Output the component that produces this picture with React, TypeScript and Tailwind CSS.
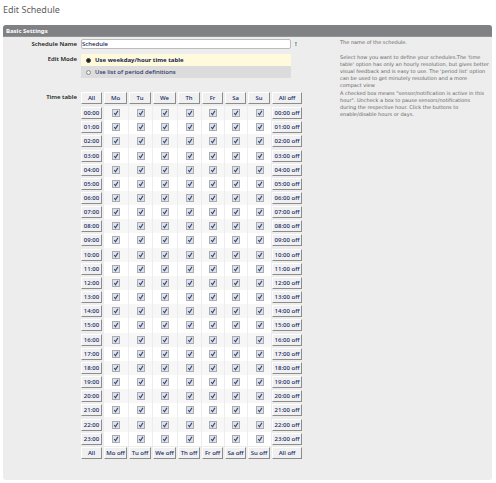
import React, { useState } from 'react';

const DAYS = ['Mo', 'Tu', 'We', 'Th', 'Fr', 'Sa', 'Su'];
const HOURS = Array.from({ length: 24 }, (_, h) => `${String(h).padStart(2, '0')}:00`);
const COLUMNS = ['w-[22px]', 'w-[25px]', 'w-[24px]', 'w-[25px]', 'w-[24px]', 'w-[23px]', 'w-[23px]', 'w-[24px]', 'w-[31px]'];

const fill = (value: boolean) => HOURS.map(() => DAYS.map(() => value));

interface CellButtonProps {
  label: string;
  onClick: () => void;
}

const CellButton: React.FC<CellButtonProps> = ({ label, onClick }) => (
  <button
    type="button"
    onClick={onClick}
    className="block w-full h-3 leading-[10px] text-center font-medium whitespace-nowrap bg-[#f0f0f0] border border-t-white border-l-white border-r-[#8c8c8c] border-b-[#8c8c8c] text-[#152a66]"
  >
    {label}
  </button>
);

interface TickBoxProps {
  label: string;
  checked: boolean;
  onChange: () => void;
}

const TickBox: React.FC<TickBoxProps> = ({ label, checked, onChange }) => (
  <span className="grid place-items-center">
    <input
      type="checkbox"
      aria-label={label}
      checked={checked}
      onChange={onChange}
      className="[grid-area:1/1] appearance-none size-2 bg-[#dfe2e7] border border-[#a9abae]"
    />
    {checked && (
      <svg viewBox="0 0 8 8" className="[grid-area:1/1] size-2 pointer-events-none" fill="none" stroke="#35477f" strokeWidth="1.1">
        <path d="M2.2 4 L3.5 5.8 L5.9 1.9" />
      </svg>
    )}
  </span>
);

interface ModeOptionProps {
  label: string;
  selected: boolean;
  onSelect: () => void;
}

const ModeOption: React.FC<ModeOptionProps> = ({ label, selected, onSelect }) => (
  <label className={`flex items-center gap-1 h-3 pl-[5px] ${selected ? 'bg-[#fffadb] font-bold text-[#152450]' : 'bg-[#dcdcdc] font-medium text-[#1f3166]'}`}>
    <input
      type="radio"
      name="mode"
      checked={selected}
      onChange={onSelect}
      className="appearance-none size-[5px] rounded-full border border-[#8a8d94] bg-[#eee] checked:bg-[#222] checked:border-[#444]"
    />
    {label}
  </label>
);

export default function App() {
  const [name, setName] = useState('Schedule');
  const [mode, setMode] = useState('table');
  const [active, setActive] = useState(() => fill(true));

  const update = (value: (h: number, d: number, old: boolean) => boolean) =>
    setActive(active.map((row, h) => row.map((old, d) => value(h, d, old))));

  return (
    <main className="px-[3px] pt-1 pb-1 font-['Noto_Sans',sans-serif] text-[6px]">
      <h1 className="h-[21px] text-[9px] leading-3 text-[#606060]">Edit Schedule</h1>

      <section className="mr-px rounded-[3px] overflow-hidden bg-[#ededed]">
        <h2 className="h-3 pl-[3px] leading-3 font-bold text-white bg-[#808184] border-b border-[#929396]">Basic Settings</h2>

        <form className="grid grid-cols-[74px_221px_1fr] gap-x-1 pt-0.5 pb-5" onSubmit={e => e.preventDefault()}>
          {/* Schedule name */}
          <label htmlFor="name" className="pt-px text-right leading-2 font-semibold text-[#1c1c1c]">Schedule Name</label>
          <div className="flex items-center gap-1 h-[10px]">
            <input
              id="name"
              value={name}
              onChange={e => setName(e.target.value)}
              className="w-[210px] h-[10px] bg-white border border-[#bbb] rounded-[2px] font-medium text-[#152450]"
            />
            <span className="font-bold text-[#2d7a3a]">!</span>
          </div>
          <p className="pl-[34px] font-['DejaVu_Sans',sans-serif] text-[5px] leading-[7px] text-[#666]">The name of the schedule.</p>

          {/* Edit mode */}
          <span className="pt-[6px] text-right leading-2 font-semibold text-[#1c1c1c]">Edit Mode</span>
          <div className="w-[210px] pt-[5px]" role="radiogroup" aria-label="Edit Mode">
            <ModeOption label="Use weekday/hour time table" selected={mode === 'table'} onSelect={() => setMode('table')} />
            <ModeOption label="Use list of period definitions" selected={mode === 'list'} onSelect={() => setMode('list')} />
          </div>
          <p className="pl-[34px] pt-[5px] pb-px font-['DejaVu_Sans',sans-serif] text-[5px] leading-[7px] whitespace-nowrap text-[#666]">
            Select how you want to define your schedules.The 'time<br />
            table' option has only an hourly resolution, but gives better<br />
            visual feedback and is easy to use. The 'period list' option<br />
            can be used to get minutely resolution and a more<br />
            compact view
          </p>

          {/* Time table */}
          <span className="pt-[3px] text-right leading-2 font-semibold text-[#1c1c1c]">Time table</span>
          <table className="table-fixed w-[221px] h-[370px] border-separate border-spacing-0">
            <colgroup>
              {COLUMNS.map((width, i) => <col key={i} className={width} />)}
            </colgroup>
            <thead>
              <tr className="h-4">
                <th className="p-0 pr-px font-normal"><CellButton label="All" onClick={() => setActive(fill(true))} /></th>
                {DAYS.map((day, d) => (
                  <th key={day} className="p-0 px-px font-normal">
                    <CellButton label={day} onClick={() => update((_, i, old) => i === d || old)} />
                  </th>
                ))}
                <th className="p-0 pl-px font-normal"><CellButton label="All off" onClick={() => setActive(fill(false))} /></th>
              </tr>
            </thead>
            <tbody>
              {HOURS.map((hour, h) => (
                <tr key={hour} className="group">
                  <th className="p-0 pr-px font-normal">
                    <CellButton label={hour} onClick={() => update((i, _, old) => i === h || old)} />
                  </th>
                  {DAYS.map((day, d) => (
                    <td key={day} className="p-0 border-l border-[#ededed] bg-white group-odd:bg-[#f7f7f7]">
                      <TickBox
                        label={`${day} ${hour}`}
                        checked={active[h][d]}
                        onChange={() => update((i, j, old) => (i === h && j === d ? !old : old))}
                      />
                    </td>
                  ))}
                  <td className="p-0 pl-px">
                    <CellButton label={`${hour} off`} onClick={() => update((i, _, old) => i !== h && old)} />
                  </td>
                </tr>
              ))}
            </tbody>
            <tfoot>
              <tr className="h-[14px]">
                <td className="p-0 pr-px"><CellButton label="All" onClick={() => setActive(fill(true))} /></td>
                {DAYS.map((day, d) => (
                  <td key={day} className="p-0 px-px">
                    <CellButton label={`${day} off`} onClick={() => update((_, i, old) => i !== d && old)} />
                  </td>
                ))}
                <td className="p-0 pl-px"><CellButton label="All off" onClick={() => setActive(fill(false))} /></td>
              </tr>
            </tfoot>
          </table>
          <p className="pl-[34px] font-['DejaVu_Sans',sans-serif] text-[5px] leading-[7px] whitespace-nowrap text-[#666]">
            A checked box means "sensor/notification is active in this<br />
            hour". Uncheck a box to pause sensors/notifications<br />
            during the respective hour. Click the buttons to<br />
            enable/disable hours or days.
          </p>
        </form>
      </section>
    </main>
  );
}
